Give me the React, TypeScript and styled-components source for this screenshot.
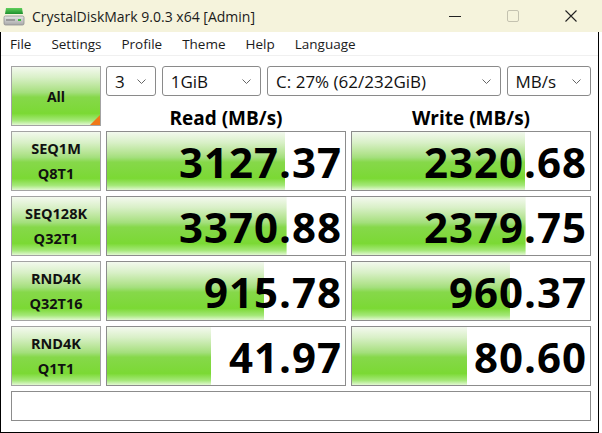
import styled, {createGlobalStyle} from "styled-components";

interface Result {
    name: string;
    params: string;
    read: number;
    write: number;
}

const results: Result[] = [
    {name: 'SEQ1M', params: 'Q8T1', read: 3127.37, write: 2320.68},
    {name: 'SEQ128K', params: 'Q32T1', read: 3370.88, write: 2379.75},
    {name: 'RND4K', params: 'Q32T16', read: 915.78, write: 960.37},
    {name: 'RND4K', params: 'Q1T1', read: 41.97, write: 80.60},
];

const menuItems = ['File', 'Settings', 'Profile', 'Theme', 'Help', 'Language'];

// bar length on a log scale: 0.1 MB/s .. 100000 MB/s
function barWidth(value: number) {
    const pct = Math.log10(value * 10) / 6 * 100;
    return `${Math.max(0, Math.min(100, pct))}% 100%`;
}

export default function App() {
    return <>
        <GlobalStyle/>
        <TitleBar>
            <AppIcon/>
            <Title>CrystalDiskMark 9.0.3 x64 [Admin]</Title>
            <Caption>
                <CaptionButton>
                    <svg width="12" height="12" viewBox="0 0 12 12">
                        <line x1="0" y1="6.5" x2="12" y2="6.5" stroke="#222" strokeWidth="1"/>
                    </svg>
                </CaptionButton>
                <CaptionButton>
                    <svg width="12" height="12" viewBox="0 0 12 12">
                        <rect x="0.5" y="0.5" width="11" height="11" rx="1.5" fill="none" stroke="#c4c2b0" strokeWidth="1"/>
                    </svg>
                </CaptionButton>
                <CaptionButton>
                    <svg width="12" height="12" viewBox="0 0 12 12">
                        <path d="M0.5 0.5 L11.5 11.5 M11.5 0.5 L0.5 11.5" stroke="#222" strokeWidth="1.1"/>
                    </svg>
                </CaptionButton>
            </Caption>
        </TitleBar>
        <Frame>
            <MenuBar>
                {menuItems.map(m => <MenuItem key={m}>{m}</MenuItem>)}
            </MenuBar>
            <Main>
                <AllButton>All<Corner/></AllButton>
                <TopPanel>
                    <Controls>
                        <Select $width={50}>3<Chevron/></Select>
                        <Select $width={100}>1GiB<Chevron/></Select>
                        <Select $width={235}>C: 27% (62/232GiB)<Chevron/></Select>
                        <Select $width={85}>MB/s<Chevron/></Select>
                    </Controls>
                    <Headers>
                        <Header>Read (MB/s)</Header>
                        <Header>Write (MB/s)</Header>
                    </Headers>
                </TopPanel>
                {results.map(r => <Row key={r.name + r.params}>
                    <TestButton>{r.name}<br/>{r.params}</TestButton>
                    <Score style={{backgroundSize: barWidth(r.read)}}>{r.read.toFixed(2)}</Score>
                    <Score style={{backgroundSize: barWidth(r.write)}}>{r.write.toFixed(2)}</Score>
                </Row>)}
                <StatusBar/>
            </Main>
        </Frame>
    </>
}

function AppIcon() {
    return <svg width="22" height="22" viewBox="0 0 22 22" style={{marginLeft: 3}}>
        <defs>
            <linearGradient id="lid" x1="0" y1="0" x2="0" y2="1">
                <stop offset="0" stopColor="#5fcf5a"/>
                <stop offset="1" stopColor="#1e8f2e"/>
            </linearGradient>
            <linearGradient id="body" x1="0" y1="0" x2="0" y2="1">
                <stop offset="0" stopColor="#e6e6e6"/>
                <stop offset="1" stopColor="#a9a9a9"/>
            </linearGradient>
        </defs>
        <path d="M3 3 H19 L20 9 H2 Z" fill="url(#lid)"/>
        <rect x="1" y="11" width="20" height="9" rx="1.5" fill="url(#body)" stroke="#8f8f8f" strokeWidth="0.8"/>
        <rect x="3" y="14" width="9" height="2" fill="#9a9a9a"/>
        <rect x="15" y="14" width="3" height="2" fill="#3cbf3c"/>
    </svg>
}

function Chevron() {
    return <ChevronIcon width="9" height="5" viewBox="0 0 9 5">
        <polyline points="0.5,0.5 4.5,4.5 8.5,0.5" fill="none" stroke="#666" strokeWidth="1"/>
    </ChevronIcon>
}

const GlobalStyle = createGlobalStyle`
    * {
        box-sizing: border-box;
    }

    html, body {
        margin: 0;
        padding: 0;
        background: #fff;
    }

    body {
        font-family: "Open Sans", "Noto Sans", sans-serif;
        color: #000;
    }
`

const greenBar = `linear-gradient(to bottom,
    #f3f9ee 0%, #d9f0c8 18%, #b2e38e 38%, #a3df7c 44%,
    #86d84a 52%, #7bd934 80%, #a4e878 92%, #e2f8d2 100%)`

const TitleBar = styled.header`
    display: flex;
    align-items: center;
    height: 32px;
    background: #f5f3dc;
`

const Title = styled.span`
    margin-left: 7px;
    font-size: 14px;
    color: #1b1b1b;
`

const Caption = styled.div`
    display: flex;
    margin-left: auto;
    margin-right: 2px;
`

const CaptionButton = styled.div`
    display: flex;
    align-items: center;
    justify-content: center;
    width: 58px;
    height: 32px;
`

const Frame = styled.div`
    width: 599px;
    height: 401px;
    border: 1px solid #000;
    border-top: none;
`

const MenuBar = styled.nav`
    display: flex;
    gap: 20px;
    height: 24px;
    padding-left: 9px;
    align-items: center;
    border-bottom: 1px solid #f0f0f0;
`

const MenuItem = styled.span`
    font-size: 13.5px;
    color: #1b1b1b;
`

const Main = styled.main`
    display: grid;
    grid-template-columns: 90px 240px 240px;
    column-gap: 5px;
    row-gap: 5px;
    padding: 10px 0 0 10px;
`

const TestButton = styled.div`
    display: flex;
    align-items: center;
    justify-content: center;
    height: 60px;
    border: 1px solid #a3a3a3;
    background: ${greenBar};
    font-size: 14.5px;
    font-weight: 700;
    line-height: 25px;
    text-align: center;
    color: #111;
`

const AllButton = styled(TestButton)`
    position: relative;
    font-size: 14px;
`

const Corner = styled.span`
    position: absolute;
    right: 0;
    bottom: 0;
    width: 0;
    height: 0;
    border-left: 10px solid transparent;
    border-bottom: 10px solid #f07818;
`

const TopPanel = styled.div`
    grid-column: 2 / 4;
    display: flex;
    flex-direction: column;
`

const Controls = styled.div`
    display: flex;
    gap: 6px;
    height: 30px;
`

const Select = styled.div<{ $width: number }>`
    display: flex;
    align-items: center;
    width: ${p => p.$width}px;
    padding: 0 0 0 8px;
    border: 1px solid #8a8a8a;
    border-radius: 3px;
    font-size: 17px;
    color: #111;
`

const ChevronIcon = styled.svg`
    margin-left: auto;
    margin-right: 9px;
`

const Headers = styled.div`
    display: grid;
    grid-template-columns: 240px 240px;
    column-gap: 5px;
    height: 30px;
`

const Header = styled.div`
    display: flex;
    align-items: flex-end;
    justify-content: center;
    font-size: 19px;
    font-weight: 700;
    line-height: 0.8;
`

const Row = styled.div`
    display: contents;
`

const Score = styled.div`
    display: flex;
    align-items: center;
    justify-content: flex-end;
    height: 60px;
    padding-right: 3px;
    border: 1px solid #8c8c8c;
    background: ${greenBar} no-repeat, #fff;
    font-size: 42px;
    font-weight: 700;
    letter-spacing: 1px;
`

const StatusBar = styled.div`
    grid-column: 1 / 4;
    height: 30px;
    border: 1px solid #8c8c8c;
`
